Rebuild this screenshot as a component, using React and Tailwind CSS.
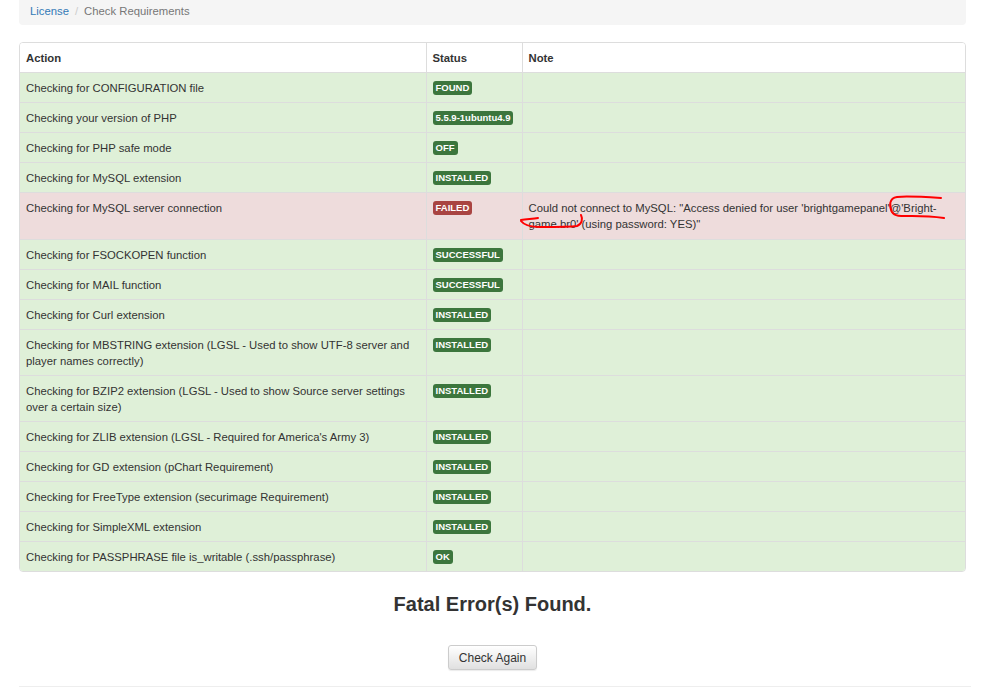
import React from "react";

const rows = [
  { action: "Checking for CONFIGURATION file", status: "FOUND" },
  { action: "Checking your version of PHP", status: "5.5.9-1ubuntu4.9" },
  { action: "Checking for PHP safe mode", status: "OFF" },
  { action: "Checking for MySQL extension", status: "INSTALLED" },
  {
    action: "Checking for MySQL server connection",
    status: "FAILED",
    danger: true,
    note: "Could not connect to MySQL: \"Access denied for user 'brightgamepanel'@'Bright-game.br0' (using password: YES)\"",
  },
  { action: "Checking for FSOCKOPEN function", status: "SUCCESSFUL" },
  { action: "Checking for MAIL function", status: "SUCCESSFUL" },
  { action: "Checking for Curl extension", status: "INSTALLED" },
  {
    action: "Checking for MBSTRING extension (LGSL - Used to show UTF-8 server and player names correctly)",
    status: "INSTALLED",
  },
  {
    action: "Checking for BZIP2 extension (LGSL - Used to show Source server settings over a certain size)",
    status: "INSTALLED",
  },
  { action: "Checking for ZLIB extension (LGSL - Required for America's Army 3)", status: "INSTALLED" },
  { action: "Checking for GD extension (pChart Requirement)", status: "INSTALLED" },
  { action: "Checking for FreeType extension (securimage Requirement)", status: "INSTALLED" },
  { action: "Checking for SimpleXML extension", status: "INSTALLED" },
  { action: "Checking for PASSPHRASE file is_writable (.ssh/passphrase)", status: "OK" },
];

function Label({ text, danger }) {
  return (
    <div className="h-[16px] flex items-center">
      <span
        className={
          "block whitespace-nowrap text-[9.5px] font-bold leading-none text-white px-[3px] pt-[2px] pb-[3px] rounded-[3px] " +
          (danger ? "bg-[#a94442]" : "bg-[#3c763d]")
        }
      >
        {text}
      </span>
    </div>
  );
}

export default function App() {
  return (
    <div
      className="relative w-[1000px] h-[689px] overflow-hidden bg-white text-[#333] text-[11.3px] leading-[16px]"
      style={{ fontFamily: '"Liberation Sans", Arial, sans-serif' }}
    >
      <div className="ml-[19px] w-[947px]">
        <div className="bg-[#f5f5f5] rounded-b-[4px] h-[25px] pt-[3px] pl-[11px] leading-[17px] flex items-start">
          <span className="text-[#337ab7]">License</span>
          <span className="text-[#ccc] px-[6px]">/</span>
          <span className="text-[#777]">Check Requirements</span>
        </div>

        <div className="mt-[17px] border border-[#ddd] rounded-[4px] overflow-hidden">
          <table className="w-full table-fixed border-collapse border-hidden">
            <colgroup>
              <col className="w-[406px]" />
              <col className="w-[96px]" />
              <col />
            </colgroup>
            <thead>
              <tr className="bg-white">
                <th className="text-left font-bold border border-[#ddd] px-[6px] pt-[7px] pb-[6px] align-top">Action</th>
                <th className="text-left font-bold border border-[#ddd] px-[6px] pt-[7px] pb-[6px] align-top">Status</th>
                <th className="text-left font-bold border border-[#ddd] px-[6px] pt-[7px] pb-[6px] align-top">Note</th>
              </tr>
            </thead>
            <tbody>
              {rows.map((r, i) => (
                <tr key={i} className={r.danger ? "bg-[#eedcdc]" : "bg-[#dff0d8]"}>
                  <td className="border border-[#ddd] px-[6px] pt-[7px] pb-[6px] align-top">{r.action}</td>
                  <td className="border border-[#ddd] px-[6px] pt-[7px] pb-[6px] align-top">
                    <Label text={r.status} danger={r.danger} />
                  </td>
                  <td
                    className={
                      "border border-[#ddd] px-[6px] pt-[7px] align-top " + (r.note ? "pb-[7px]" : "pb-[6px]")
                    }
                  >
                    {r.note || ""}
                  </td>
                </tr>
              ))}
            </tbody>
          </table>
        </div>

        <div className="mt-[21px] text-center text-[20px] leading-[22px] font-bold text-[#333]">Fatal Error(s) Found.</div>

        <div className="mt-[30px] flex justify-center">
          <button className="h-[25px] px-[10px] text-[12px] text-[#333] border border-[#ccc] rounded-[3px] bg-gradient-to-b from-white to-[#e0e0e0] shadow-[0_1px_1px_rgba(0,0,0,0.08)]">
            Check Again
          </button>
        </div>
      </div>

      <div className="ml-[19px] w-[952px] mt-[16px] border-t border-[#eee]" />

      <svg
        className="absolute left-0 top-0 pointer-events-none"
        width="1000"
        height="689"
        viewBox="0 0 1000 689"
        fill="none"
      >
        <path
          d="M941 198 C925 197 905 196 897 197 C889 198 889 206 892 212 C895 217 903 216 912 216 C925 216 937 217 944 218"
          stroke="#ff0000"
          strokeWidth="2"
          strokeLinecap="round"
        />
        <path
          d="M521 220 C527 219 533 219 538 218 M521 221 C524 225 530 227 540 227 C556 227 570 227 577 226 C582 224 583 219 581 215"
          stroke="#ff0000"
          strokeWidth="2"
          strokeLinecap="round"
        />
      </svg>
    </div>
  );
}
